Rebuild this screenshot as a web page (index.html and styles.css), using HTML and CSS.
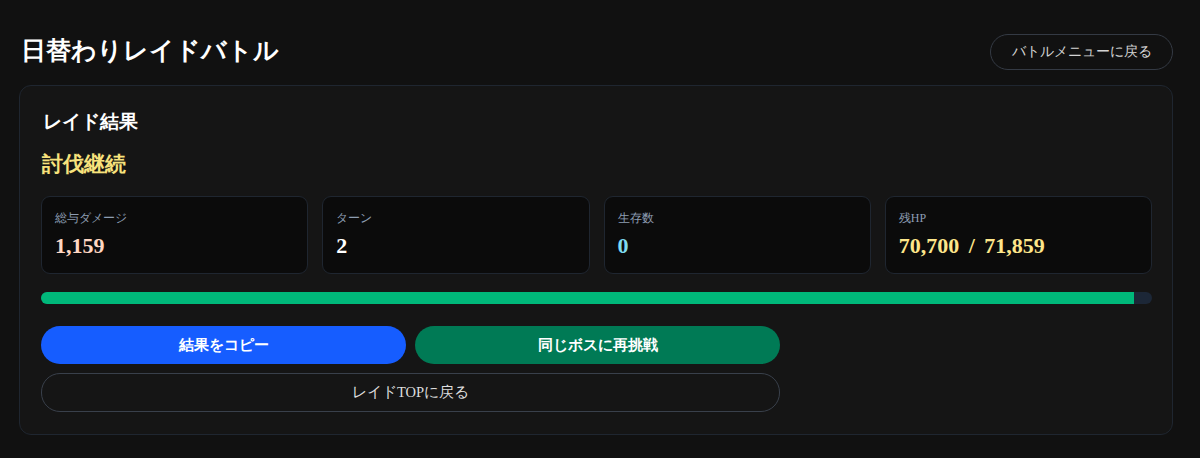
FILE: index.html
```html
<!DOCTYPE html>
<html lang="ja">
<head>
    <meta charset="UTF-8">
    <meta name="viewport" content="width=device-width, initial-scale=1.0">
    <title>日替わりレイドバトル</title>
    <link rel="stylesheet" href="styles.css">
</head>
<body>

    <div class="page">
        <div class="header">
            <h1>日替わりレイドバトル</h1>
            <button class="back-btn">バトルメニューに戻る</button>
        </div>

        <!-- Result card -->
        <div class="card">
            <h2>レイド結果</h2>
            <p class="status">討伐継続</p>

            <div class="stats">
                <div class="stat">
                    <div class="stat-label">総与ダメージ</div>
                    <div class="stat-value damage">1,159</div>
                </div>
                <div class="stat">
                    <div class="stat-label">ターン</div>
                    <div class="stat-value">2</div>
                </div>
                <div class="stat">
                    <div class="stat-label">生存数</div>
                    <div class="stat-value alive">0</div>
                </div>
                <div class="stat">
                    <div class="stat-label">残HP</div>
                    <div class="stat-value hp">70,700 / 71,859</div>
                </div>
            </div>

            <div class="hp-bar">
                <div class="hp-fill" style="width: 98.39%"></div>
            </div>

            <div class="actions">
                <button class="btn copy-btn">結果をコピー</button>
                <button class="btn retry-btn">同じボスに再挑戦</button>
                <button class="btn top-btn">レイドTOPに戻る</button>
            </div>
        </div>
    </div>

</body>
</html>
```

FILE: styles.css
```css
* {
    margin: 0;
    padding: 0;
    box-sizing: border-box;
}
body {
    font-family: "Liberation Serif", serif;
    background-color: #111111;
    color: #f2f2f2;
}
.page {
    width: 1154px;
    margin-left: 19px;
    padding-top: 30px;
}
.header {
    display: flex;
    justify-content: space-between;
    align-items: center;
    height: 40px;
    padding-left: 2px;
}
h1 {
    font-size: 24.5px;
    font-weight: bold;
    color: #ffffff;
}
.back-btn {
    height: 36px;
    padding: 0 20px 0 21px;
    margin-top: 4px;
    background: transparent;
    border: 1px solid #343a44;
    border-radius: 18px;
    color: #d4d4d4;
    font-family: inherit;
    font-size: 14px;
    cursor: pointer;
}
.card {
    margin-top: 15px;
    background: #151515;
    border: 1px solid #1f2630;
    border-radius: 12px;
    padding: 23px 20px 22px 21px;
}
h2 {
    font-size: 19px;
    line-height: 26px;
    font-weight: bold;
    color: #ffffff;
    padding-left: 2px;
}
.status {
    margin-top: 15px;
    font-size: 21px;
    line-height: 28px;
    font-weight: bold;
    color: #f7e27c;
    padding-left: 1px;
}
.stats {
    display: grid;
    grid-template-columns: repeat(4, 1fr);
    gap: 14px;
    margin-top: 18px;
}
.stat {
    background: #0b0b0b;
    border: 1px solid #1f2630;
    border-radius: 9px;
    height: 78px;
    padding: 12px 13px;
}
.stat-label {
    font-size: 12px;
    line-height: 18px;
    color: #8d9db2;
}
.stat-value {
    margin-top: 4px;
    font-size: 22px;
    line-height: 30px;
    font-weight: bold;
    color: #ffffff;
}
.damage {
    color: #ffd7c2;
}
.alive {
    color: #7fdcf2;
}
.hp {
    color: #fde68a;
    word-spacing: 4px;
}
.hp-bar {
    margin-top: 18px;
    height: 12px;
    background: #1c2737;
    border-radius: 6px;
    overflow: hidden;
}
.hp-fill {
    height: 100%;
    background: #00b87a;
}
.actions {
    display: grid;
    grid-template-columns: 1fr 1fr;
    gap: 9px;
    width: 739px;
    margin-top: 22px;
}
.btn {
    height: 38px;
    border: none;
    border-radius: 19px;
    color: #ffffff;
    font-family: inherit;
    font-size: 15px;
    font-weight: bold;
    cursor: pointer;
}
.copy-btn {
    background: #165dff;
}
.retry-btn {
    background: #007a55;
}
.top-btn {
    grid-column: 1 / 3;
    height: 39px;
    background: transparent;
    border: 1px solid #39404b;
    color: #dddddd;
    font-size: 14.5px;
    font-weight: normal;
}
```
